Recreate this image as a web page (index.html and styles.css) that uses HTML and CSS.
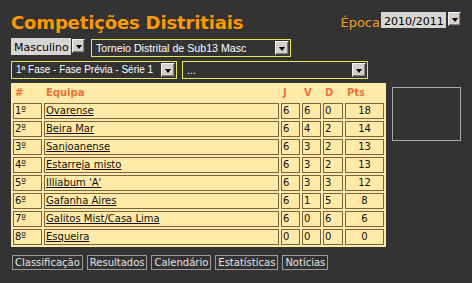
FILE: index.html
```html
<!DOCTYPE html>
<html lang="pt">
<head>
<meta charset="utf-8">
<title>Competições Distritiais</title>
<link rel="stylesheet" href="styles.css">
</head>
<body>
<div class="page">
  <header class="top">
    <h1 class="title">Competições Distritiais</h1>
    <div class="season">
      <span class="season-label">Época</span>
      <div class="gsel gsel-season"><span class="gsel-val">2010/2011</span></div>
      <span class="arrow"></span>
    </div>
  </header>

  <div class="filters">
    <div class="filter-row">
      <div class="gsel-wrap">
        <div class="gsel gsel-gender"><span class="gsel-val">Masculino</span></div>
        <span class="arrow"></span>
      </div>
      <div class="ysel ysel-comp"><span class="ysel-val">Torneio Distrital de Sub13 Masc</span><span class="arrow"></span></div>
    </div>
    <div class="filter-row">
      <div class="ysel ysel-phase"><span class="ysel-val ysel-val-sm">1ª Fase - Fase Prévia - Série 1</span><span class="arrow"></span></div>
      <div class="ysel ysel-round"><span class="ysel-val">...</span><span class="arrow"></span></div>
    </div>
  </div>

  <div class="main">
    <table class="standings">
      <thead>
        <tr>
          <th class="c-pos">#</th>
          <th class="c-team">Equipa</th>
          <th class="c-num">J</th>
          <th class="c-num">V</th>
          <th class="c-d">D</th>
          <th class="c-pts">Pts</th>
        </tr>
      </thead>
      <tbody>
        <tr><td>1º</td><td><a href="#">Ovarense</a></td><td>6</td><td>6</td><td>0</td><td class="pts">18</td></tr>
        <tr><td>2º</td><td><a href="#">Beira Mar</a></td><td>6</td><td>4</td><td>2</td><td class="pts">14</td></tr>
        <tr><td>3º</td><td><a href="#">Sanjoanense</a></td><td>6</td><td>3</td><td>2</td><td class="pts">13</td></tr>
        <tr><td>4º</td><td><a href="#">Estarreja misto</a></td><td>6</td><td>3</td><td>2</td><td class="pts">13</td></tr>
        <tr><td>5º</td><td><a href="#">Illiabum 'A'</a></td><td>6</td><td>3</td><td>3</td><td class="pts">12</td></tr>
        <tr><td>6º</td><td><a href="#">Gafanha Aires</a></td><td>6</td><td>1</td><td>5</td><td class="pts">8</td></tr>
        <tr><td>7º</td><td><a href="#">Galitos Mist/Casa Lima</a></td><td>6</td><td>0</td><td>6</td><td class="pts">6</td></tr>
        <tr><td>8º</td><td><a href="#">Esqueira</a></td><td>0</td><td>0</td><td>0</td><td class="pts">0</td></tr>
      </tbody>
    </table>
    <aside class="side-box"></aside>
  </div>

  <nav class="tabs">
    <a class="tab" href="#">Classificação</a>
    <a class="tab" href="#">Resultados</a>
    <a class="tab" href="#">Calendário</a>
    <a class="tab" href="#">Estatísticas</a>
    <a class="tab" href="#">Notícias</a>
  </nav>
</div>
</body>
</html>
```

FILE: styles.css
```css
html, body {
  margin: 0;
  padding: 0;
  background: #333333;
}

body {
  font-family: "DejaVu Sans", Verdana, sans-serif;
  font-size: 10px;
  color: #000;
}

.page {
  padding: 12px 11px 0 11px;
}

/* header */
.top {
  display: flex;
  justify-content: space-between;
  align-items: flex-start;
  height: 27px;
}

.title {
  margin: 0;
  font-size: 18px;
  line-height: 21px;
  font-weight: bold;
  color: #ff9900;
  letter-spacing: -0.15px;
}

.season {
  display: flex;
  align-items: flex-start;
}

.season-label {
  font-size: 13px;
  line-height: 16px;
  margin-top: 3px;
  color: #f0a028;
  margin-right: 1px;
}

/* gray selects */
.gsel-wrap {
  display: flex;
  align-items: flex-start;
}

.gsel {
  box-sizing: border-box;
  background: #d8d6d2;
  font-size: 11px;
  line-height: 12px;
  padding: 4px 0 0 3px;
  color: #000;
}

.gsel-season {
  width: 65px;
  height: 16px;
  margin-right: 2px;
}

.gsel-gender {
  width: 60px;
  height: 17px;
  margin-top: -1px;
  margin-right: 1px;
}

.arrow {
  box-sizing: border-box;
  display: flex;
  align-items: center;
  justify-content: center;
  width: 14px;
  height: 14px;
  background: #d4d0c8;
  border: 1px solid;
  border-color: #f4f4f4 #404040 #404040 #f4f4f4;
  box-shadow: inset -1px -1px 0 #808080;
  flex: none;
}

.arrow::after {
  content: "";
  width: 0;
  height: 0;
  border-left: 3.5px solid transparent;
  border-right: 3.5px solid transparent;
  border-top: 4px solid #000;
  margin-top: 1px;
}

.gsel-gender + .arrow,
.gsel-season + .arrow {
  width: 13px;
}

/* filters */
.filters {
  display: flex;
  flex-direction: column;
  gap: 4px;
}

.filter-row {
  display: flex;
  align-items: flex-start;
  gap: 6px;
}

.filter-row + .filter-row {
  gap: 5px;
}

.ysel {
  box-sizing: border-box;
  display: flex;
  align-items: center;
  justify-content: space-between;
  height: 18px;
  padding: 1px;
  border: 1px solid #e6e65a;
  background: #333333;
}

.ysel-val {
  font-family: "Liberation Sans", Arial, sans-serif;
  font-size: 10.67px;
  line-height: 16px;
  color: #ffffff;
  padding-left: 3px;
  white-space: nowrap;
}

.ysel-val-sm {
  font-size: 10px;
}

.ysel-comp { width: 200px; }
.ysel-phase { width: 166px; }
.ysel-round { width: 186px; }

/* main */
.main {
  display: flex;
  align-items: flex-start;
  gap: 6px;
  margin-top: 4px;
}

.standings {
  width: 375px;
  table-layout: fixed;
  border-collapse: separate;
  border-spacing: 2px;
  background: #ffeaa8;
  font-size: 10px;
}

.standings th,
.standings td {
  box-sizing: border-box;
  height: 16px;
  padding: 0 1px;
  line-height: 14px;
  text-align: left;
  white-space: nowrap;
  overflow: hidden;
}

.standings th {
  border: 1px solid transparent;
  color: #e8743b;
  font-weight: bold;
}

.standings td {
  border: 1px solid #786442;
  color: #111;
}

.standings td a {
  color: #111;
  text-decoration: underline;
}

.standings td.pts {
  text-align: center;
}

.c-pos { width: 29px; }
.c-team { width: 235px; }
.c-num { width: 19px; }
.c-d { width: 20px; }
.c-pts { width: 39px; }

.side-box {
  box-sizing: border-box;
  width: 71px;
  height: 54px;
  margin-top: 4px;
  border: 1px solid #a8a8a8;
}

/* tabs */
.tabs {
  display: flex;
  gap: 4px;
  margin-top: 8px;
  padding-left: 1px;
}

.tab {
  border: 1px solid #9a9a9a;
  padding: 0 2px;
  font-size: 10px;
  line-height: 13px;
  color: #e4e4e4;
  text-decoration: none;
}
```
